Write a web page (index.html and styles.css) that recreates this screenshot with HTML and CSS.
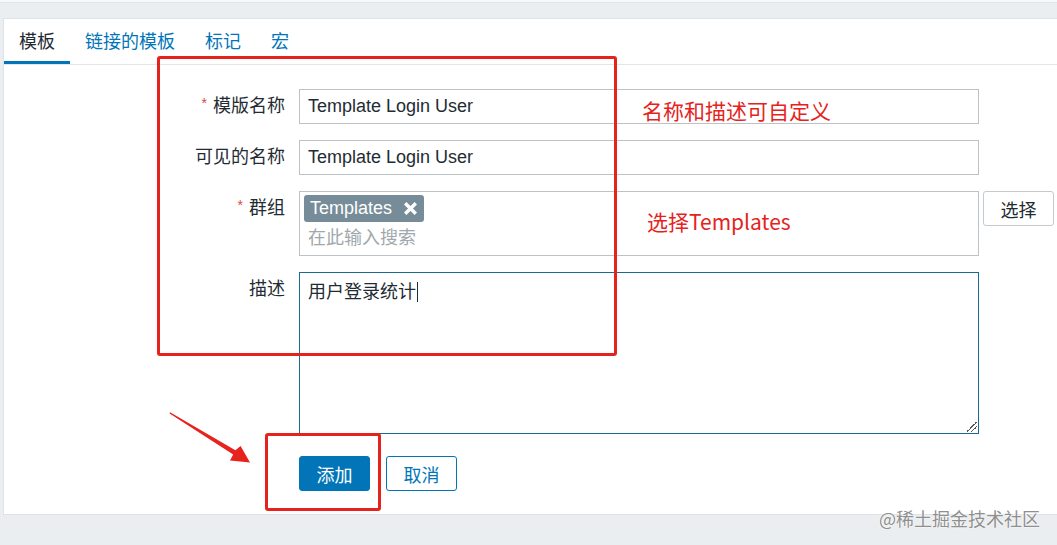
FILE: index.html
```html
<!DOCTYPE html>
<html lang="zh-CN">
<head>
<meta charset="utf-8">
<title>模板</title>
<link rel="stylesheet" href="styles.css">
</head>
<body>
<div class="page">
  <div class="topstrip"></div>
  <div class="card">
    <nav class="tabs">
      <a class="tab active">模板</a>
      <a class="tab">链接的模板</a>
      <a class="tab">标记</a>
      <a class="tab">宏</a>
    </nav>
    <form class="form">
      <label class="label"><span class="req">*</span>模版名称</label>
      <div class="input">Template Login User</div>
      <div class="side"></div>

      <label class="label">可见的名称</label>
      <div class="input">Template Login User</div>
      <div class="side"></div>

      <label class="label"><span class="req">*</span>群组</label>
      <div class="multi">
        <span class="tag">Templates<svg class="tag-x" viewBox="0 0 13 13" width="13" height="13"><path d="M1.2 1.2 L11.8 11.8 M11.8 1.2 L1.2 11.8" stroke="#fff" stroke-width="3.4" stroke-linecap="butt"/></svg></span>
        <div class="placeholder">在此输入搜索</div>
      </div>
      <div class="side"><button type="button" class="btn-select">选择</button></div>

      <label class="label">描述</label>
      <div class="textarea">用户登录统计<span class="caret"></span><span class="grip"></span></div>
      <div class="side"></div>

      <div class="spacer"></div>
      <div class="actions">
        <button type="button" class="btn-primary">添加</button>
        <button type="button" class="btn-outline">取消</button>
      </div>
      <div class="side"></div>
    </form>
  </div>

  <div class="mark mark-form"></div>
  <div class="mark mark-add"></div>
  <div class="note note-1">名称和描述可自定义</div>
  <div class="note note-2">选择Templates</div>
  <svg class="arrow" width="1057" height="545" viewBox="0 0 1057 545">
    <path d="M170 412.2 L235.4 450.2 L240.6 446 L250 462.5 L230 460.6 L233.2 454.4 L169.6 413.6 Z" fill="#e8231d"/>
  </svg>
  <div class="watermark">@稀土掘金技术社区</div>
</div>
</body>
</html>
```

FILE: styles.css
```css
html, body {
  margin: 0;
  padding: 0;
}
body {
  background: #ebeef0;
  font-family: "Liberation Sans", "Noto Sans CJK SC", sans-serif;
  color: #1f2c33;
  overflow: hidden;
  width: 1057px;
  height: 545px;
}
.page {
  position: relative;
  width: 1057px;
  height: 545px;
}
.topstrip {
  height: 2px;
  background: #f6f7f8;
  border-bottom: 1px solid #e2e5e7;
}
.card {
  margin: 15px -20px 0 3px;
  background: #fff;
  border: 1px solid #dfe3e6;
  height: 495px;
  box-sizing: content-box;
}
.tabs {
  display: flex;
  border-bottom: 1px solid #e4e7e9;
}
.tab {
  display: block;
  padding: 4px 15px 0;
  line-height: 38px;
  height: 38px;
  font-size: 18px;
  color: #0275b8;
  border-bottom: 3px solid transparent;
  cursor: pointer;
}
.tab.active {
  color: #1f2c33;
  border-bottom-color: #0275b8;
}
.form {
  display: grid;
  grid-template-columns: 281px 680px 71px;
  column-gap: 14px;
  row-gap: 16px;
  padding: 24px 0 22px;
}
.side {
  margin-left: -10px;
  align-self: start;
}
.label {
  text-align: right;
  font-size: 18px;
  line-height: 35px;
  height: 35px;
  overflow: hidden;
  align-self: start;
  white-space: nowrap;
}
.req {
  color: #d24b48;
  font-size: 14px;
  line-height: 0;
  vertical-align: 4px;
  margin-right: 6px;
}
.input {
  box-sizing: border-box;
  height: 35px;
  border: 1px solid #bcc3c8;
  padding: 0 8px;
  font-size: 18px;
  line-height: 33px;
  color: #1f2c33;
  overflow: hidden;
}
.multi {
  box-sizing: border-box;
  height: 65px;
  border: 1px solid #bcc3c8;
  padding: 3px 4px;
}
.tag {
  display: inline-flex;
  align-items: center;
  height: 27px;
  background: #768d99;
  border-radius: 3px;
  color: #fff;
  font-size: 18px;
  line-height: 27px;
  padding: 0 7px 0 6px;
  vertical-align: top;
}
.tag-x {
  margin-left: 12px;
}
.placeholder {
  margin-top: 4px;
  padding-left: 4px;
  font-size: 18px;
  line-height: 24px;
  color: #a0a8ad;
}
.btn-select {
  display: block;
  box-sizing: border-box;
  width: 71px;
  height: 35px;
  background: #fff;
  border: 1px solid #c4cbcf;
  border-radius: 3px;
  font-family: inherit;
  font-size: 18px;
  color: #1f2c33;
  padding: 0;
}
.textarea {
  position: relative;
  box-sizing: border-box;
  height: 162px;
  border: 1px solid #1a6a91;
  padding: 7px 8px;
  font-size: 18px;
  line-height: 24px;
  color: #1f2c33;
}
.caret {
  display: inline-block;
  width: 1px;
  height: 20px;
  background: #1f2c33;
  vertical-align: -4px;
  margin-left: 1px;
}
.grip {
  position: absolute;
  right: 1px;
  bottom: 1px;
  width: 10px;
  height: 10px;
  background:
    linear-gradient(135deg, transparent 0 45%, #555 45% 52%, transparent 52% 68%, #555 68% 75%, transparent 75%);
}
.actions {
  display: flex;
  gap: 16px;
  margin-top: 6px;
}
.btn-primary, .btn-outline {
  box-sizing: border-box;
  width: 71px;
  height: 35px;
  border-radius: 3px;
  font-family: inherit;
  font-size: 18px;
  padding: 0;
}
.btn-primary {
  background: #0275b8;
  border: 1px solid #0275b8;
  color: #fff;
}
.btn-outline {
  background: #fff;
  border: 1px solid #0275b8;
  color: #0275b8;
}
.mark {
  position: absolute;
  border: 3px solid #e5231c;
  border-radius: 3px;
  box-sizing: border-box;
}
.mark-form {
  left: 157px;
  top: 56px;
  width: 460px;
  height: 300px;
}
.mark-add {
  left: 265px;
  top: 433px;
  width: 116px;
  height: 78px;
}
.note {
  position: absolute;
  font-family: "Noto Sans CJK SC", sans-serif;
  font-size: 21px;
  line-height: 26px;
  color: #e5231c;
  white-space: nowrap;
}
.note-1 {
  left: 642px;
  top: 97px;
}
.note-2 {
  left: 647px;
  top: 208px;
}
.arrow {
  position: absolute;
  left: 0;
  top: 0;
  pointer-events: none;
}
.watermark {
  position: absolute;
  left: 879px;
  top: 505px;
  font-family: "Noto Sans CJK SC", sans-serif;
  font-size: 18px;
  line-height: 26px;
  color: #8f8f8f;
  text-shadow: 0 0 1px #fff, 0 0 2px #fff;
  white-space: nowrap;
}
```
